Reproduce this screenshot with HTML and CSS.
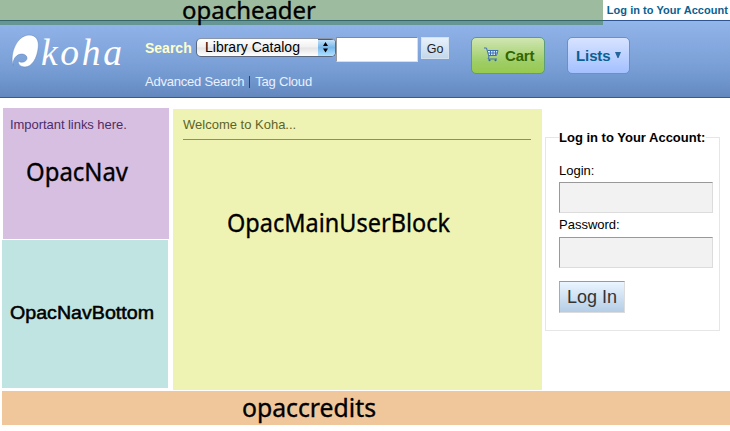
FILE: index.html
```html
<!DOCTYPE html>
<html lang="en">
<head>
<meta charset="utf-8">
<title>Koha online catalog</title>
<link rel="stylesheet" href="styles.css">
</head>
<body>
<div class="members"><a>Log in to Your Account</a></div>
<div class="opacheader">
  <svg width="603" height="36"><text x="182" y="19" font-size="24" textLength="134" lengthAdjust="spacingAndGlyphs">opacheader</text></svg>
</div>
<header class="masthead">
  <svg class="logo" width="116" height="40" viewBox="8 31 116 40">
    <path class="leaf" d="M13 65.500C9.500 53 17 35.500 29 35C36 35 39 40 38.300 47C37.300 58 32 67 25 67C20.500 67 17.500 64 18.500 61C21 63.500 26.500 62 27 58.500C27.300 54 20.500 52.500 16.500 56C14 58 13 61.500 13 65.500Z"/>
    <text class="wordmark" x="41" y="64.500" font-size="37.500" textLength="81" lengthAdjust="spacing">koha</text>
  </svg>
  <div class="search">
    <div class="search-row">
      <label>Search</label>
      <div class="select"><span>Library Catalog</span><i><svg width="12" height="16"><path d="M3 7L5.500 3L8 7ZM3 9.500L5.500 13.500L8 9.500Z"/></svg></i></div>
      <div class="query"></div>
      <div class="go">Go</div>
    </div>
    <div class="links"><a>Advanced Search</a><b></b><a>Tag Cloud</a></div>
  </div>
  <div class="button cart">
    <svg width="15" height="15" viewBox="0 0 15 15"><path class="basket" d="M3 3H14L12.500 9H5Z"/><path class="wire" d="M0 1H2.500L5 10L4 12H13M3.500 3.500H14L12.500 8.500H5M4 6H13.500M6.500 3V9M9 3V9M11.500 3V9"/><circle cx="5.500" cy="13.300" r="1"/><circle cx="11.500" cy="13.300" r="1"/></svg>
    <span>Cart</span>
  </div>
  <div class="button lists"><span>Lists</span><svg width="6" height="7"><path d="M0 0H6L3.500 6H2.500Z"/></svg></div>
</header>
<main class="content">
  <div class="side">
    <section class="nav">
      <p>Important links here.</p>
      <svg width="166" height="40"><text x="23" y="23" font-size="25" textLength="102" lengthAdjust="spacingAndGlyphs">OpacNav</text></svg>
    </section>
    <section class="nav-bottom">
      <svg width="166" height="30"><text class="plain" x="8" y="20" font-size="17.500" textLength="144" lengthAdjust="spacingAndGlyphs">OpacNavBottom</text></svg>
    </section>
  </div>
  <section class="user-block">
    <p>Welcome to Koha...</p>
    <svg width="348" height="50"><text x="44" y="24" font-size="25.500" textLength="223" lengthAdjust="spacingAndGlyphs">OpacMainUserBlock</text></svg>
  </section>
  <form class="login">
    <fieldset>
      <legend>Log in to Your Account:</legend>
      <label>Login:</label>
      <div class="field"></div>
      <label class="password">Password:</label>
      <div class="field"></div>
      <div class="submit">Log In</div>
    </fieldset>
  </form>
</main>
<footer class="credits">
  <svg width="728" height="34"><text x="240" y="26" font-size="24.500" textLength="134" lengthAdjust="spacingAndGlyphs">opaccredits</text></svg>
</footer>
</body>
</html>
```
FILE: styles.css
```css
* { box-sizing: border-box; }
body { margin: 0; background: #fff; color: #000; font: 13px/15px "Liberation Sans", Arial, sans-serif; }
svg { display: block; overflow: visible; }
svg text { font-family: "Noto Sans", sans-serif; fill: #000; stroke: #000; stroke-width: .35px; }
svg text.plain { font-family: "Liberation Sans", sans-serif; stroke-width: .5px; }
p { margin: 0; }

.members { height: 20px; padding: 3px 2px 0 0; text-align: right; font-size: 11px; line-height: 15px; font-weight: bold; letter-spacing: .05px; color: #0a6090; }
.opacheader { position: absolute; top: 0; left: 0; width: 603px; height: 25px; background: rgba(59, 121, 64, .5); }

.masthead { display: flex; align-items: flex-start; height: 78px; border-top: 1px solid #2e5590; border-bottom: 1px solid #335a9d; background: linear-gradient(#92b5ea, #7ba1d8 55%, #7096ce 78%, #6288be); }
.logo { margin: 10px 0 0 8px; }
.logo .leaf { fill: #fff; stroke: #5c83bb; stroke-width: .5px; }
.logo .wordmark { font-family: "Liberation Serif", serif; font-style: italic; fill: #fff; stroke: none; }
.search { width: 304px; margin: 16px 0 0 21px; }
.search-row { display: flex; align-items: flex-start; height: 37px; }
.search-row label { width: 51px; padding-top: 3px; color: #ffffcc; font-size: 14px; font-weight: bold; line-height: 16px; }
.select { display: flex; width: 140px; height: 19px; margin-top: 1px; border: 1px solid #5a6980; border-top-color: #8995aa; border-radius: 5px; background: linear-gradient(#fff, #f0f0f0 48%, #e3e3e3 52%, #fff); overflow: hidden; }
.select span { flex: 1; padding-left: 8px; font-size: 14px; line-height: 17px; white-space: nowrap; }
.select i { width: 17px; padding-left: 2px; background: linear-gradient(#cfe6fa, #79b8ec 50%, #b0e2ff); box-shadow: inset 0 1px #3d5fa8; }
.query { width: 82px; height: 25px; border: 1px solid #dedede; border-top: 1px solid #888; border-left-color: #999; background: #fff; }
.go { width: 28px; height: 22px; margin-left: 3px; border: 1px solid #d5e2ee; background: linear-gradient(#e7f1fb, #c3d8ec); color: #222; font-size: 12.500px; line-height: 22px; text-align: center; }
.links { display: flex; align-items: center; color: #e9f0ff; letter-spacing: -.22px; line-height: 16px; white-space: nowrap; }
.links b { width: 1px; height: 12px; margin: 0 5px; background: #1b3fa0; }

.button { display: flex; align-items: center; height: 37px; margin-top: 16px; border: 1px solid; border-radius: 5px; font-size: 16px; font-weight: bold; }
.cart { width: 74px; margin-left: 22px; padding-left: 12px; gap: 6px; border-color: #5b9d7d; background: linear-gradient(#d0e6b2, #9dcd64 70%, #97c950); color: #336600; font-size: 15px; letter-spacing: -.2px; }
.cart svg { fill: #315fb0; margin-top: -3px; }
.cart .basket { fill: #e5f0ff; }
.cart .wire { fill: none; stroke: #3e70b5; stroke-width: 1px; }
.lists { width: 63px; margin-left: 22px; padding-left: 8px; gap: 4px; border-color: #6094cf; background: linear-gradient(#d7e3ff, #a3c0ff); color: #0a6090; font-size: 15px; letter-spacing: -.1px; }
.lists svg { fill: #24659b; }

.content { display: flex; height: 293px; padding: 10px 0 0 2px; }
.side { width: 171px; }
.nav { width: 166px; height: 131px; margin-left: 1px; padding-top: 10px; background: #d7bfe2; }
.nav p { padding-left: 7px; color: #502c67; line-height: 14px; letter-spacing: -.05px; }
.nav svg { margin-top: 26px; }
.nav-bottom { width: 166px; height: 148px; margin-top: 1px; padding-top: 59px; background: #c0e4e1; }
.user-block { width: 369px; height: 281px; margin-top: 1px; padding: 8px 11px 0 10px; background: #eef3b3; }
.user-block p { height: 23px; border-bottom: 1px solid #8e934b; color: #5e6328; }
.user-block svg { margin-top: 68px; }

.login { width: 175px; margin: 22px 0 0 3px; }
fieldset { height: 201px; margin: 0; padding: 18px 6px 0 13px; border: 1px solid #e6e6e6; }
legend { padding: 0 1px 0 0; font-weight: bold; line-height: 15px; white-space: nowrap; }
fieldset label { display: block; height: 19px; line-height: 15px; }
fieldset .password { line-height: 13px; }
.field { width: 154px; height: 31px; margin-bottom: 5px; border: 1px solid #dcdcdc; border-top-color: #999; border-left-color: #999; background: #f2f2f2; }
.submit { width: 66px; height: 32px; margin-top: 13px; border: 1px solid #dcdcdc; border-top-color: #999; border-left-color: #aaa; background: linear-gradient(#eaf5ff, #b5cde5); color: #333; font-size: 18px; line-height: 31px; text-align: center; }
.credits { height: 34px; margin-left: 2px; background: #f0c79b; }
```
